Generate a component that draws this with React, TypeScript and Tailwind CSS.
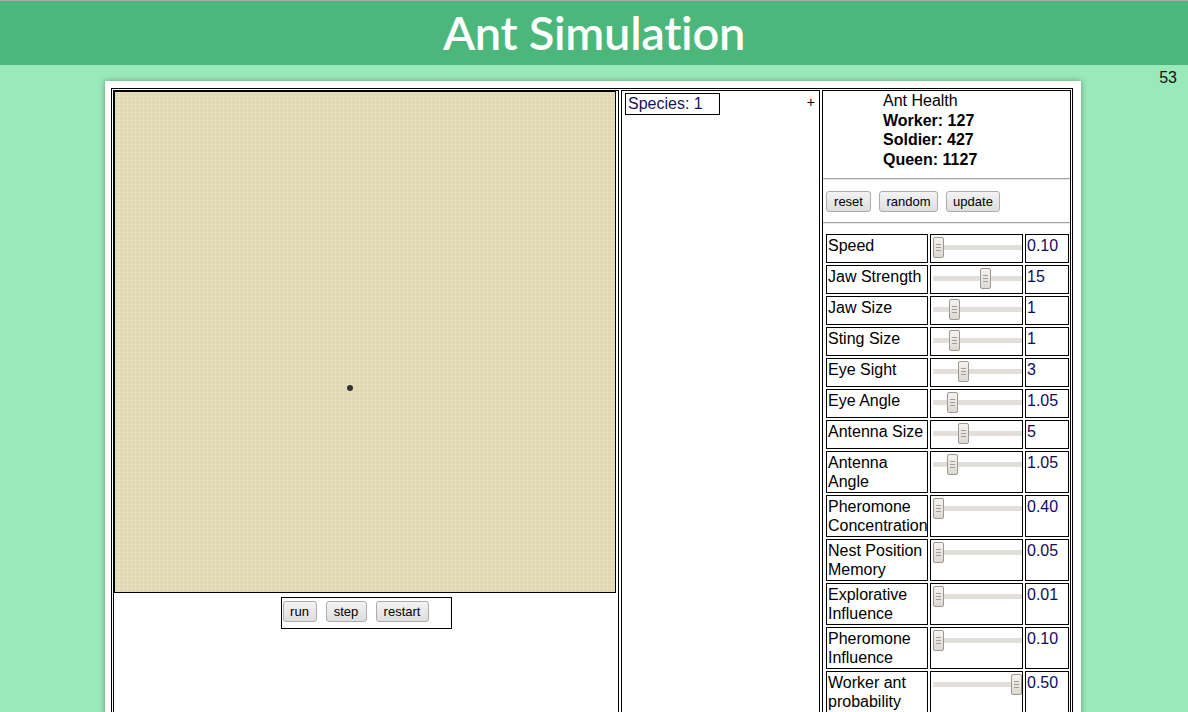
import React from "react";

const FONT = { fontFamily: '"Liberation Sans", Arial, sans-serif' };

function Btn({ label, w }: { label: string; w: string }) {
  return (
    <button
      className={`${w} h-[21px] border border-[#acacac] rounded-[3px] bg-gradient-to-b from-[#f3f3f3] to-[#dedede] text-[13px] leading-[19px] text-black text-center p-0`}
    >
      {label}
    </button>
  );
}

function Slider({ pos }: { pos: number }) {
  return (
    <div className="relative ml-[2px] mt-[2px] h-[21px] w-[89px]">
      <div className="absolute left-0 right-0 top-[8px] h-[5px] bg-[#e2dfda] rounded-[1px]" />
      <div
        className="absolute top-0 w-[11px] h-[21px] border border-[#9e988f] rounded-[2px] bg-gradient-to-b from-[#f5f3f0] to-[#dcd8d2] flex flex-col items-center justify-center gap-[2px]"
        style={{ left: pos }}
      >
        <div className="w-[5px] h-px bg-[#a39d94]" />
        <div className="w-[5px] h-px bg-[#a39d94]" />
        <div className="w-[5px] h-px bg-[#a39d94]" />
      </div>
    </div>
  );
}

const params: { label: string; pos: number; value: string }[] = [
  { label: "Speed", pos: 0, value: "0.10" },
  { label: "Jaw Strength", pos: 47, value: "15" },
  { label: "Jaw Size", pos: 16, value: "1" },
  { label: "Sting Size", pos: 16, value: "1" },
  { label: "Eye Sight", pos: 25, value: "3" },
  { label: "Eye Angle", pos: 14, value: "1.05" },
  { label: "Antenna Size", pos: 25, value: "5" },
  { label: "Antenna Angle", pos: 14, value: "1.05" },
  { label: "Pheromone Concentration", pos: 0, value: "0.40" },
  { label: "Nest Position Memory", pos: 0, value: "0.05" },
  { label: "Explorative Influence", pos: 0, value: "0.01" },
  { label: "Pheromone Influence", pos: 0, value: "0.10" },
  { label: "Worker ant probability", pos: 78, value: "0.50" },
];

export default function App() {
  return (
    <div
      className="relative h-[712px] overflow-hidden bg-[#9ae9ba] text-black"
      style={FONT}
    >
      <div className="h-[65px] bg-[#4cb77b] border-t border-[#a8a8a8] flex items-center justify-center">
        <h1
          className="text-white text-[47px] font-semibold leading-none -mt-[1px] tracking-[-0.3px] [font-variant-ligatures:none]"
          style={{ fontFamily: "Lato, sans-serif" }}
        >
          Ant Simulation
        </h1>
      </div>

      <div className="absolute right-[11px] top-[69px] text-[16px] leading-[18px] text-[#111]">
        53
      </div>

      <div className="ml-[105px] mt-[16px] w-[976px] min-h-[700px] bg-white pl-[6px] pt-[7px] shadow-[0_0_6px_rgba(0,0,0,0.35)]">
        <div className="w-[962px] border border-black p-[1px] flex gap-[2px] items-stretch">
          {/* Left cell */}
          <div className="w-[506px] border border-black min-h-[640px]">
            <div className="w-[502px] h-[502px] border border-black">
              <div className="relative w-[500px] h-[500px] bg-[#e0d8b2] bg-[linear-gradient(90deg,rgba(255,255,255,0.14)_1px,transparent_1px),linear-gradient(rgba(255,255,255,0.14)_1px,transparent_1px)] bg-[length:4px_4px]">
                <div className="absolute left-[232px] top-[293px] w-[6px] h-[6px] rounded-full bg-[#333]" />
              </div>
            </div>
            <div className="mt-[4px] mx-auto w-[171px] h-[32px] border border-black pl-[1px] pt-[3px] flex gap-[9px]">
              <Btn label="run" w="w-[34px]" />
              <Btn label="step" w="w-[41px]" />
              <Btn label="restart" w="w-[53px]" />
            </div>
          </div>

          {/* Middle cell */}
          <div className="w-[199px] border border-black flex justify-between items-start">
            <div className="ml-[3px] mt-[2px] w-[95px] h-[22px] border border-black pl-[2px] text-[16px] leading-[20px] text-[#14145a]">
              Species: 1
            </div>
            <div className="mr-[4px] mt-[3px] text-[14px] leading-[16px]">+</div>
          </div>

          {/* Right cell */}
          <div className="w-[249px] border border-black">
            <div className="pl-[60px] text-[16px] leading-[19.5px]">
              <div>Ant Health</div>
              <div className="font-bold">Worker: 127</div>
              <div className="font-bold">Soldier: 427</div>
              <div className="font-bold">Queen: 1127</div>
            </div>
            <div className="mt-[9px] border-t border-t-[#a2a2a2] border-b border-b-[#ececec]" />
            <div className="mt-[11px] ml-[3px] flex gap-[8px]">
              <Btn label="reset" w="w-[45px]" />
              <Btn label="random" w="w-[59px]" />
              <Btn label="update" w="w-[54px]" />
            </div>
            <div className="mt-[10px] border-t border-t-[#a2a2a2] border-b border-b-[#ececec]" />
            <div className="mt-[10px] ml-[3px] grid grid-cols-[102px_93px_44px] gap-[2px]">
              {params.map((p) => (
                <React.Fragment key={p.label}>
                  <div className="border border-black pl-[1px] py-[1px] text-[16px] leading-[19px] whitespace-normal">
                    {p.label}
                  </div>
                  <div className="border border-black h-full min-h-[29px]">
                    <Slider pos={p.pos} />
                  </div>
                  <div className="border border-black p-[1px] text-[16px] leading-[19px] text-[#0d0d60]">
                    {p.value}
                  </div>
                </React.Fragment>
              ))}
            </div>
          </div>
        </div>
      </div>
    </div>
  );
}
